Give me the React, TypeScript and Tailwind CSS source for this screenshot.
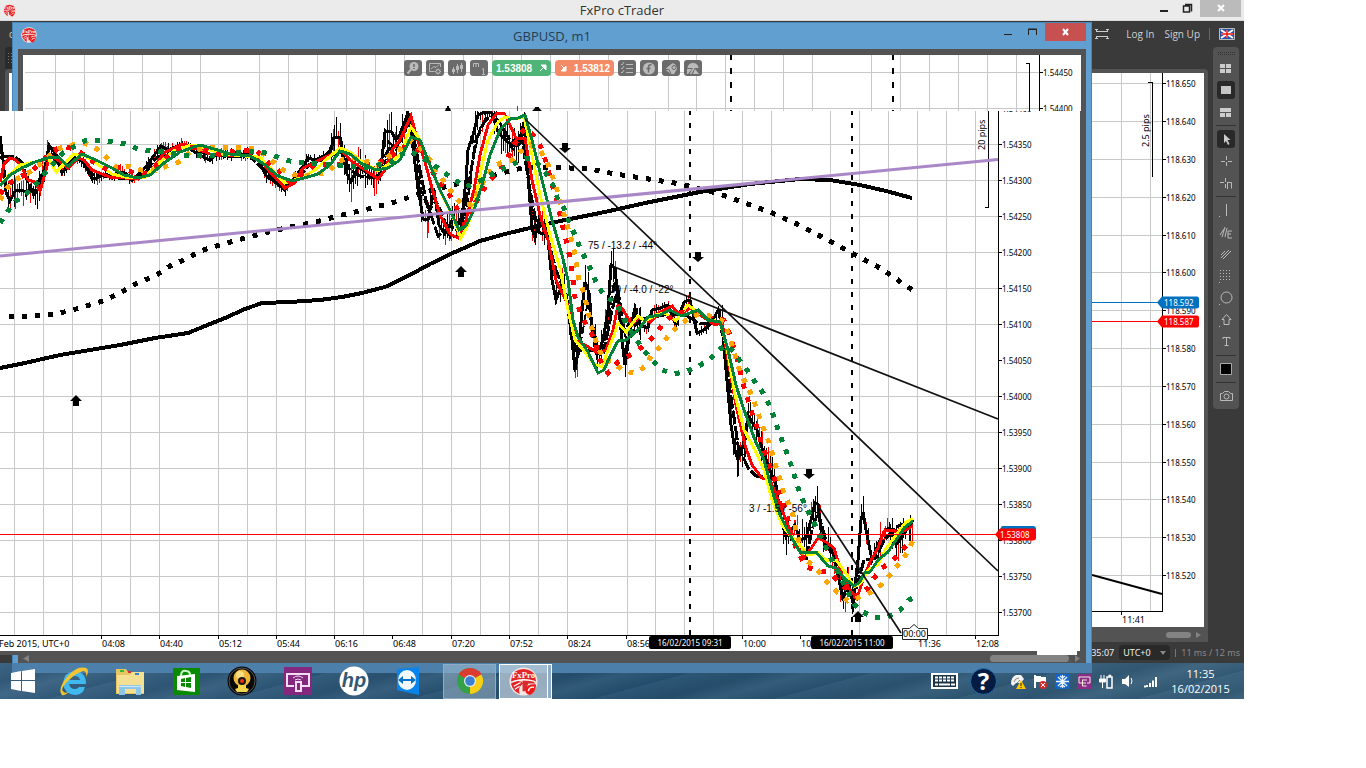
import React from "react";

type Pt = [number, number];

const parse = (s: string): Pt[] =>
  s.trim().split(/\s+/).map((p) => p.split(",").map(Number) as Pt);

const PRICE =
  "0,136 3,160 6,192 10,201 15,191 21,190 26,192 31,190 35,194 40,186 44,170 47,158 49,145 54,152 57,160 62,173 67,166 75,158 83,162 88,171 92,179 97,178 105,174 112,178 118,172 125,173 132,180 140,173 148,164 155,154 161,146 168,150 175,147 182,144 190,149 198,154 205,158 210,160 217,154 225,153 235,155 248,154 258,158 266,176 275,182 285,190 293,180 302,168 308,158 315,160 325,156 331,150 334,137 340,137 342,152 347,174 351,182 358,167 365,171 374,178 380,175 385,132 391,131 396,140 400,134 408,113 412,140 417,180 423,219 428,220 434,190 439,225 445,234 452,220 460,224 463,208 466,180 468,150 473,135 478,115 485,112 492,113 497,130 505,140 512,145 518,146 524,122 528,175 532,228 535,238 540,215 544,230 548,240 552,280 556,300 562,285 567,300 572,340 575,370 579,345 583,300 585,282 588,290 591,320 597,355 603,340 608,310 611,265 615,268 618,300 622,340 625,365 630,330 635,308 640,325 648,328 652,310 660,308 668,305 676,325 684,302 690,300 697,333 704,330 712,322 718,310 722,325 726,370 731,425 735,450 738,460 745,440 748,415 752,422 757,430 762,448 770,470 776,485 781,520 786,537 795,525 800,540 806,538 811,520 815,503 818,504 821,530 826,545 832,550 838,575 843,600 848,580 853,603 858,560 861,520 863,512 866,530 872,560 878,545 885,530 890,528 896,545 903,535 910,525 913,520";

const INNER =
  "0,158 6,156 14,156 22,162 27,180 33,193 40,178 46,166 52,155 60,166 70,162 78,158 86,164 92,174 104,176 118,178 134,178 146,172 156,158 170,152 184,146 196,152 210,154 224,156 250,156 262,168 278,182 288,186 300,176 310,164 328,158 340,150 350,170 360,176 376,178 388,150 400,142 410,118 419,165 426,200 438,236 450,226 460,232 468,190 476,140 486,118 498,120 510,140 522,140 530,190 538,232 547,236 556,270 564,290 576,350 590,350 604,352 612,310 618,290 624,330 634,318 650,318 668,314 684,314 700,324 722,322 730,390 738,445 748,468 756,476 770,478 778,510 788,532 798,548 806,560 812,530 818,512 828,548 838,562 846,590 856,590 864,560 876,558 884,540 898,526 913,522";

const ECHO =
  "384,168 389,142 396,150 404,130 411,124 415,150 421,190 429,212 436,200 443,214 450,238 458,236 464,228 470,186 473,160 480,128 490,116 500,122 507,142 514,150 520,138 526,150 531,200 536,228 546,224 551,262 558,290 566,296 570,320 578,358 583,330 588,300 594,330 600,356 607,330 614,282 620,318 628,345 638,320";

const RED =
  "0,182 4,164 10,158 16,160 22,168 28,180 35,182 40,191 46,170 50,155 58,160 68,168 78,158 84,160 92,170 102,174 110,177 125,178 140,178 147,176 155,165 165,152 183,144 195,148 210,154 225,155 245,155 258,157 270,172 285,188 295,183 303,168 315,162 330,155 340,149 350,160 365,170 378,179 385,170 392,150 400,140 411,116 417,138 425,162 432,188 440,215 450,234 458,238 466,220 474,190 480,155 488,125 497,113 504,113 510,125 516,138 525,138 532,180 540,215 548,240 556,280 568,305 575,340 585,345 598,353 606,350 613,330 618,305 622,308 632,325 638,318 650,322 660,312 672,306 680,315 690,308 700,315 715,325 722,322 728,360 736,405 745,445 752,465 762,478 770,480 778,500 788,525 796,545 804,558 810,550 818,538 826,542 834,548 842,575 850,590 857,598 863,580 870,562 878,548 884,531 892,530 900,533 913,526";

const YELLOW =
  "0,186 8,176 20,165 35,162 48,158 56,172 64,164 74,154 85,156 97,164 112,174 130,178 145,177 160,162 175,150 192,145 205,148 222,154 245,156 260,157 272,170 285,183 300,178 315,170 328,158 340,148 350,152 362,162 378,171 390,163 400,155 411,127 420,140 430,165 442,195 452,215 461,238 468,225 475,200 482,165 488,140 498,122 505,117 514,119 524,117 530,145 540,195 550,235 560,268 568,310 575,340 585,352 594,364 602,367 608,350 614,335 618,323 626,332 638,316 645,321 656,315 665,313 676,321 688,305 698,312 710,320 720,322 727,348 735,395 744,430 755,450 764,470 772,500 782,525 790,535 800,545 808,555 818,553 826,560 836,560 846,573 854,587 862,582 868,570 878,565 885,550 896,535 906,522 913,519";

const GREEN =
  "0,186 10,175 22,168 35,162 48,158 58,157 68,166 82,154 98,161 112,168 124,175 138,178 150,175 164,163 180,152 200,145 214,149 230,154 250,156 264,164 278,176 292,181 304,178 318,174 330,165 340,151 350,154 362,164 376,170 388,168 400,160 411,137 420,140 430,165 440,190 450,210 459,230 466,226 474,210 482,185 490,155 500,130 510,119 518,118 525,115 532,140 542,180 552,220 562,255 568,280 573,320 578,337 588,352 598,373 604,370 610,356 618,341 626,340 638,330 648,317 660,315 670,310 682,316 698,310 708,320 720,322 728,350 736,385 744,410 755,440 764,460 772,490 780,515 790,535 800,552 816,552 828,566 836,568 844,578 854,586 860,582 864,573 870,572 878,560 888,552 896,540 904,528 913,521";

const DOT_GREEN =
  "0,223 7,212 16,201 27,193 36,184 45,173 54,163 63,153 75,146 86,140 99,140 113,142 126,144 138,149 152,151 165,152 190,156 217,155 256,151 270,154 282,159 294,162 309,163 330,165 348,166 363,168 378,165 390,162 400,155 410,151 430,162 443,172 455,180 465,187 478,182 488,176 500,170 512,165 525,158 535,160 545,172 553,185 558,200 565,210 570,225 575,235 580,248 586,260 592,272 597,285 605,296 616,303 622,315 628,327 635,338 643,349 652,360 662,370 674,374 687,371 699,366 710,359 720,349 728,345 738,358 747,370 755,382 763,393 769,404 774,417 778,430 783,443 788,456 792,468 796,481 800,494 806,507 812,519 818,531 824,543 830,556 836,568 842,580 848,592 854,604 863,612 875,618 888,617 900,610 909,600 913,598";

const DOT_ORANGE =
  "0,200 7,188 17,179 28,173 39,165 50,155 60,148 72,145 85,143 97,149 107,158 117,168 129,166 141,170 154,171 167,166 179,162 190,152 203,148 217,147 230,147 243,148 256,149 268,157 280,168 290,174 302,176 314,175 328,172 338,162 350,157 363,160 378,165 390,155 400,149 411,141 422,150 430,160 437,173 447,185 453,194 462,205 472,204 478,192 484,180 494,166 503,162 512,160 520,152 530,145 540,150 547,162 552,175 557,190 562,208 565,218 570,235 574,250 576,262 579,280 584,293 587,307 590,320 593,333 598,347 604,360 614,363 623,371 635,373 646,366 652,354 662,345 670,333 680,325 692,316 702,314 714,317 724,322 730,338 735,355 740,372 746,384 753,398 758,413 762,425 767,437 771,449 775,463 779,476 783,490 788,502 793,515 796,530 800,545 806,560 816,568 825,580 837,592 848,601 860,597 872,592 882,584 892,573 900,562 908,552 913,540";

const DOT_RED =
  "0,194 8,184 18,178 30,172 40,164 50,153 62,146 75,149 84,155 95,163 108,170 120,167 134,173 148,173 160,163 170,154 184,147 200,148 216,155 240,150 256,150 268,162 279,171 290,182 302,174 316,164 330,164 343,165 360,164 376,164 392,156 404,147 416,148 427,160 436,178 448,192 458,210 470,212 482,192 490,180 500,170 508,157 516,142 525,128 533,135 541,147 547,165 551,182 556,197 560,215 566,240 570,258 572,272 575,297 580,312 586,325 594,338 600,360 608,373 618,362 630,355 642,347 655,335 664,322 678,312 695,314 712,318 724,320 730,335 738,362 744,387 748,400 752,413 757,427 762,445 768,460 773,475 779,492 786,510 790,530 796,548 806,567 817,570 830,573 842,585 856,597 868,588 874,578 882,568 893,560 902,550 911,540";

const SLOW =
  "0,368 25,363 60,355 90,350 120,345 155,338 188,333 205,326 225,318 245,309 262,303 290,302 320,300 342,297 362,293 385,287 408,276 430,264 455,252 480,241 505,234 530,228 560,221 600,213 650,202 700,192 750,184 800,179 830,180 860,185 886,191 912,198";

const SLOW_DOTS =
  "9,317 35,316 56,314 80,308 103,301 120,293 135,284 155,276 170,266 188,258 200,251 213,247 238,240 264,233 290,227 316,222 342,215 368,209 395,202 407,198 433,190 457,184 483,180 498,174 522,168 550,167 590,169 615,174 655,180 681,184 700,189 720,194 745,203 770,212 795,223 820,236 850,252 880,268 914,291";

function wicks() {
  const pts = parse(PRICE);
  let seed = 7;
  const rnd = () => (seed = (seed * 16807) % 2147483647) / 2147483647;
  const black: string[] = [];
  const red: string[] = [];
  for (let i = 1; i < pts.length; i++) {
    const [x0, y0] = pts[i - 1];
    const [x1, y1] = pts[i];
    for (let x = x0; x < x1; x += 2) {
      const y = y0 + ((y1 - y0) * (x - x0)) / (x1 - x0);
      const calm = (x > 50 && x < 330) || (x > 640 && x < 720);
      const a = calm ? 7 : 20;
      const up = Math.round(rnd() * a);
      const down = Math.round(rnd() * a);
      const d = `M${x},${Math.round(y) - up}v${up + down}`;
      (rnd() > 0.68 ? red : black).push(d);
    }
  }
  return { black: black.join(""), red: red.join("") };
}

const GRID_X = [14, 43, 72, 101, 130, 159, 218, 247, 276, 305, 334, 363, 422, 451, 480, 509, 538, 567, 627, 655, 684, 713, 742, 771, 830, 859, 888, 917, 946, 975];
const PRICES: [string, number][] = [
  ["1.54350", 145], ["1.54300", 181], ["1.54250", 217], ["1.54200", 253],
  ["1.54150", 289], ["1.54100", 325], ["1.54050", 361], ["1.54000", 397], ["1.53950", 433],
  ["1.53900", 469], ["1.53850", 505], ["1.53800", 541], ["1.53750", 577], ["1.53700", 613],
];
const TIMES: [string, number][] = [
  ["04:08", 101], ["04:40", 159], ["05:12", 218], ["05:44", 276], ["06:16", 334], ["06:48", 392],
  ["07:20", 451], ["07:52", 509], ["08:24", 567], ["08:56", 626], ["10:00", 742], ["10:32", 800],
  ["11:36", 917], ["12:08", 975],
];

const tiny = "font-['Noto_Sans','Open_Sans',sans-serif] text-[8px]";
const small = "font-['Noto_Sans','Open_Sans',sans-serif] text-[9px]";

function Arrow({ x, y, up }: { x: number; y: number; up?: boolean }) {
  return (
    <path
      d={up ? "M0,-6L6,0H3V5H-3V0H-6Z" : "M0,5L6,0H3V-5H-3V0H-6Z"}
      transform={`translate(${x},${y})`}
      fill="#000"
    />
  );
}

function MainChart() {
  const w = wicks();
  return (
    <svg width="1080" height="540" viewBox="0 111 1080 540" className="block" role="img" aria-label="GBPUSD one minute chart">
      <g stroke="#c8c8c8" shapeRendering="crispEdges">
        {GRID_X.map((x) => <path key={x} d={`M${x + 0.5},111V635`} />)}
        {PRICES.filter(([, y]) => y !== 361).map(([p, y]) => <path key={p} d={`M0,${y - 0.5}H998`} />)}
      </g>
      <g stroke="#000" shapeRendering="crispEdges">
        <path d="M998.500,111V635.500M0,635.500H999" fill="none" />
        {PRICES.map(([p, y]) => <path key={p} d={`M999,${y - 0.5}h3`} />)}
        {TIMES.map(([t, x]) => <path key={t} d={`M${x + 0.5},636v3`} />)}
        <path d="M985,207.500H988.500V111" fill="none" />
        <path d="M690,111V635M852,111V635" strokeWidth="2" strokeDasharray="5 8" strokeDashoffset="1" />
      </g>
      <g className={tiny}>
        <text x="1002" y="112">1.54400</text>
        {PRICES.map(([p, y]) => <text key={p} x="1002" y={y + 3}>{p}</text>)}
      </g>
      <g className={small}>
        {TIMES.map(([t, x]) => <text key={t} x={x + 1} y="647">{t}</text>)}
        <text x="-1" y="647">Feb 2015, UTC+0</text>
        <text transform="translate(985,150) rotate(-90)">20 pips</text>
      </g>
      <g fill="none" shapeRendering="crispEdges">
        <path d={w.black} stroke="#000" />
        <path d={w.red} stroke="#f00" />
        <polyline points={INNER} stroke="#000" strokeWidth="3" strokeDasharray="14 2" />
        <polyline points={ECHO} stroke="#000" strokeWidth="2" strokeDasharray="9 3" />
        <polyline points={PRICE} stroke="#000" strokeWidth="3" />
        <polyline points={SLOW_DOTS} stroke="#000" strokeWidth="5" strokeDasharray="5 8" />
        <polyline points={SLOW} stroke="#000" strokeWidth="4" />
        <polyline points={RED} stroke="#f00" strokeWidth="3" />
        <polyline points={YELLOW} stroke="#ff0" strokeWidth="3" />
        <polyline points={DOT_RED} stroke="#f00" strokeWidth="5" strokeDasharray="5 9" />
        <polyline points={DOT_ORANGE} stroke="#ffa500" strokeWidth="5" strokeDasharray="5 8" />
        <polyline points={DOT_GREEN} stroke="#008237" strokeWidth="5" strokeDasharray="5 8" />
        <polyline points={GREEN} stroke="#008237" strokeWidth="3" />
      </g>
      <path d="M0,256L998,159.500" stroke="#aa88c8" strokeWidth="3" />
      <g stroke="#111" strokeWidth="1.700">
        <path d="M525,119L998,571M612,266L724,311L998,419M817,504L901,633" fill="none" />
      </g>
      <path d="M0,534.500H998" stroke="#f00" shapeRendering="crispEdges" />
      <Arrow x={565} y={148} />
      <Arrow x={698} y={257} />
      <Arrow x={809} y={474} />
      <Arrow x={76} y={401} up />
      <Arrow x={461} y={272} up />
      <Arrow x={858} y={617} up />
      <g className="font-['Liberation_Sans',Arial,sans-serif] text-[10px]">
        <text x="588" y="249">75 / -13.2 / -44°</text>
        <text x="610" y="293">39 / -4.0 / -22°</text>
        <text x="749" y="512">3 / -1.5 / -56°</text>
      </g>
      <path d="M999,531l3,-5h31q3,0 3,3v8H1002z" fill="#0070c0" />
      <path d="M995,534.500l5,-6h33q3,0 3,3v6q0,3 -3,3H1000z" fill="#f00" />
      <text x="1000" y="538" fill="#fff" className={tiny}>1.53808</text>
      <rect x="649" y="636" width="82" height="13" rx="2" />
      <rect x="811" y="636" width="82" height="13" rx="2" />
      <g fill="#fff" className={tiny}>
        <text x="690" y="646" textAnchor="middle">16/02/2015 09:31</text>
        <text x="852" y="646" textAnchor="middle">16/02/2015 11:00</text>
      </g>
      <path d="M902.500,628.500h7l4.500,-4l4.500,4h9v11h-25z" fill="#fff" stroke="#222" />
      <text x="903" y="637" className={small}>00:00</text>
    </svg>
  );
}

function UpperChart() {
  return (
    <svg width="1056" height="56" viewBox="24 55 1056 56" className="block" aria-hidden="true">
      <g stroke="#c8c8c8" shapeRendering="crispEdges">
        {GRID_X.map((x) => <path key={x} d={`M${x + 40.5},55V111`} />)}
        <path d="M24,72.500H1038M24,108.500H1038" />
      </g>
      <g stroke="#000" fill="none" shapeRendering="crispEdges">
        <path d="M1038.500,55V111M1039,72.500h3M1039,108.500h3M1025,63.500H1028.500V111" />
        <path d="M730,55V111M892,55V111" strokeWidth="2" strokeDasharray="6 8" strokeDashoffset="1" />
        <path d="M516.500,106v5" stroke="#f00" />
      </g>
      <path d="M444,111l1,-3h1v-2h2v2h1l1,3zM531,111l3,-3v-1h4v1l3,3z" />
      <g className={tiny}>
        <text x="1042" y="76">1.54450</text>
        <text x="1042" y="112">1.54400</text>
      </g>
    </svg>
  );
}

function SideChart() {
  const ys = [83, 121, 159, 197, 235, 272, 310, 348, 386, 424, 462, 499, 537, 575];
  return (
    <svg width="112" height="554" viewBox="1092 73 112 554" className="block bg-white" role="img" aria-label="Secondary price chart">
      <g stroke="#c8c8c8" shapeRendering="crispEdges">
        <path d="M1121.500,73V611M1150.500,73V611" />
        {ys.map((y) => <path key={y} d={`M1092,${y + 0.5}H1162`} />)}
      </g>
      <g stroke="#000" fill="none" shapeRendering="crispEdges">
        <path d="M1162.500,73V611.500H1092M1121.500,612v3M1148,82.500H1152.500V177" />
        {ys.map((y) => <path key={y} d={`M1163,${y + 0.5}h3`} />)}
      </g>
      <g className={tiny}>
        {ys.map((y, i) => <text key={y} x="1166" y={y + 4}>{(118.65 - i * 0.01).toFixed(3)}</text>)}
      </g>
      <g className={small}>
        <text x="1122" y="623">11:41</text>
        <text transform="translate(1149,147) rotate(-90)">2.5 pips</text>
      </g>
      <path d="M1092,575L1162,594" stroke="#000" strokeWidth="2" />
      <path d="M1092,302.500H1158" stroke="#0070c0" />
      <path d="M1092,321.500H1158" stroke="#f00" />
      <path d="M1157,302.500l5,-6h35q2,0 2,2v8q0,2 -2,2h-35z" fill="#0070c0" />
      <path d="M1157,321.500l5,-6h35q2,0 2,2v8q0,2 -2,2h-35z" fill="#f00" />
      <g fill="#fff" className={tiny}>
        <text x="1164" y="306">118.592</text>
        <text x="1164" y="325">118.587</text>
      </g>
    </svg>
  );
}

function FxLogo({ size }: { size: number }) {
  return (
    <svg width={size} height={size} viewBox="0 0 30 30" aria-hidden="true">
      <circle cx="15" cy="15" r="14.500" fill="#f4e6e4" />
      <path d="M3,10Q4,3 15,2Q26,3 27,10L28,15Q15,11 2,15Z" fill="#e3262a" />
      <path d="M2,17Q11,12 15,17Q9,20 11,28Q4,25 2,17Z" fill="#e3262a" />
      <path d="M14,14h11l2,3h-7l-3,8h-3z" fill="#d82a2a" />
      <path d="M17,23Q19,17 28,18Q28,25 22,29Q16,28 17,23Z" fill="#f01818" />
      <path d="M20,25q1,-5 6,-4" stroke="#fff" strokeWidth="1.500" fill="none" />
      <path d="M4,15Q15,11 27,15M5,20L12,16M6,23l5,-3" stroke="#fff" strokeWidth="1.200" fill="none" />
      <text x="15" y="11" textAnchor="middle" fill="#fff" className="font-['Liberation_Serif',serif] text-[9px] font-bold">FxPro</text>
    </svg>
  );
}

const CHART_ICONS: Record<string, React.ReactNode> = {
  "Chart zoom": <><circle cx="10" cy="6.500" r="4.500" fill="#bbb" stroke="none" /><path d="M7,9.500L3.500,13.500" strokeWidth="2" /><path d="M10,4v3M10,8v1" stroke="#6b6b6b" strokeWidth="1.500" /></>,
  "Chart settings": <><path d="M14.500,7V3.500h-11v8h5M5,9l3,-2.500l2,1l3,-3" /><circle cx="12" cy="11.500" r="2" /><path d="M12,8.500v1M12,13.500v1M9,11.500h1M14,11.500h1M10,9.500l1,1M13,12.500l1,1M14,9.500l-1,1M10,13.500l1,-1" /></>,
  "Chart type": <><path d="M5.500,7v7M9.500,4v9M13.500,3v9" /><path d="M4,9h3v3H4zM8,6h3v4H8zM12,5h3v4h-3z" fill="#bbb" stroke="none" /></>,
  "Timeframe": <><path d="M3.500,7V3.500h5V7M6,4V7M12,9.500l1.500,-1v6M12,14.500h3" /></>,
  "Watch list": <><path d="M8,4.500h7M8,8.500h7M8,12.500h7" /><path d="M3,4l1,1l2,-3M3,8l1,1l2,-3M3,12l1,1l2,-3" /></>,
  "Indicators": <><circle cx="9" cy="8.500" r="6" fill="#bbb" stroke="none" /><path d="M11.500,5Q8.500,4 8.500,7.500V12.500M6.500,8.500h4" stroke="#6b6b6b" strokeWidth="1.500" /></>,
  "Templates": <><path d="M3,9.500L8,5l3,-2q4,2 4,6l-3,5h-3z" fill="#bbb" stroke="none" /><circle cx="12" cy="7.500" r="2" stroke="#6b6b6b" /><path d="M3,9.500h4l2,4" stroke="#6b6b6b" /></>,
  "Objects": <><path d="M3.500,8a5.500,5 0 0 1 11,0z" fill="#bbb" stroke="none" /><path d="M3,9h5L4,14H3zM11,9l4,5h-6z" fill="#bbb" stroke="none" /><path d="M6.500,14l3.500,-6" stroke="#bbb" strokeWidth="1.500" /></>,
};

function ChartButton({ name }: { name: string }) {
  return (
    <button type="button" aria-label={name} className="h-4 w-[18px] rounded-[3px] bg-[#6b6b6b]">
      <svg width="18" height="16" viewBox="0 0 18 16" fill="none" stroke="#bbb" className="block" aria-hidden="true">{CHART_ICONS[name]}</svg>
    </button>
  );
}

const TOOLS: (null | { name: string; on?: boolean; art: React.ReactNode })[] = [
  { name: "Grid view", art: <path d="M5,7h5v4H5zM11,7h5v4h-5zM5,12h5v4H5zM11,12h5v4h-5z" fill="#ccc" stroke="none" /> },
  { name: "Single view", on: true, art: <path d="M6,7h10v8H6z" fill="#c4c4c4" stroke="none" /> },
  { name: "Mixed view", art: <path d="M5,7h11v4H5zM5,12h5v4H5zM11,12h5v4h-5z" fill="#ccc" stroke="none" /> },
  null,
  { name: "Pointer", on: true, art: <path d="M9,6v9l2,-2l2,4l1.500,-1l-2,-4h3z" fill="#ccc" stroke="none" /> },
  { name: "Crosshair", art: <path d="M11.500,6v4M11.500,12v4M6,11.500h4M13,11.500h4" /> },
  { name: "Market snap", art: <path d="M10.500,6v4M5,10.500h4M10.500,12v4M12,10.500h4.500v6M12.500,11v6" /> },
  null,
  { name: "Line", art: <path d="M11.500,5v12M4,17.500h1" /> },
  { name: "Equidistant channel", art: <path d="M5,14L9,8M7,16L10,6M10,16L12,7M13,17V10h4M13,13h3M13,17h4" /> },
  { name: "Parallel lines", art: <path d="M6,15L14,7M8,16l8,-8M6,12l4,-4" /> },
  { name: "Fibonacci", art: <path d="M5,5.500h12M5,8.500h12M5,11.500h12M5,14.500h12M4,17.500h1" strokeDasharray="1 2" /> },
  { name: "Ellipse", art: <><circle cx="11.500" cy="10.500" r="5.500" /><path d="M4,17.500h1" /></> },
  { name: "Arrow", art: <path d="M11.500,5.500L7,10.500h2v5h5v-5h2zM4,17.500h1" /> },
  { name: "Text", art: <path d="M8,8V6.500h7V8M11.500,6.500v8M9.500,14.500h4" /> },
  null,
  { name: "Colour", art: <path d="M5.500,5.500h11v11h-11z" fill="#000" stroke="#aaa" /> },
  null,
  { name: "Snapshot", art: <><path d="M5.500,8.500h2l2,-2h4l2,2h2v7h-12z" /><circle cx="11.500" cy="11.500" r="2.500" /></> },
];

const ui = "font-['Open_Sans','Noto_Sans',sans-serif]";

function TaskIcon({ name }: { name: string }) {
  const art: Record<string, React.ReactNode> = {
    "Internet Explorer": <><path d="M27,18H10q1,5 6,5q3,0 4,-2h6q-2,8 -10,8Q5,28 4,17Q5,6 16,5q11,1 11,13zM10,14h11q-1,-4 -5,-4t-6,4z" fill="#3fb9f0" /><path d="M3,29Q-2,23 8,11T27,2q4,2 0,9q1,-6 -3,-6Q17,7 9,15T4,25q1,3 6,1q-4,4 -7,3z" fill="#f2c431" /></>,
    "File Explorer": <><path d="M1,3h10l2,3h16v22H1z" fill="#e7c55f" /><path d="M2,9h13l2,-3h12v21H2z" fill="#f5df93" /><path d="M5,4h4v2H5z" fill="#3b3" /><path d="M13,5h3v2h-3z" fill="#c33" /><path d="M20,7h4v2h-4z" fill="#38c" /><path d="M4,29V19h22v10h-5v-6h-11v6z" fill="#8cc6e8" /><path d="M4,20.500h22" stroke="#cfe8f8" /></>,
    "Store": <><path d="M2,2h27v27H2z" fill="#0a8a00" /><path d="M6,10l18,-2v18L6,24z" fill="#fff" /><path d="M10,10Q10,4 15,5q4,0 4,4" fill="none" stroke="#cfc" strokeWidth="2" /><path d="M10,13l4,-1v4h-4zM15,12l5,-1v5h-5zM10,17h4v4l-4,-1zM15,17h5v5l-5,-1z" fill="#0a8a00" /></>,
    "Webcam": <><circle cx="15" cy="15" r="14.500" fill="#080808" /><circle cx="15" cy="15" r="13" fill="none" stroke="#555" /><circle cx="15" cy="12" r="8.500" fill="#eeb735" /><circle cx="13" cy="9" r="4" fill="#f9df80" /><path d="M11,19h8v3l3,1l-2,3h-10l-2,-3l3,-1z" fill="#f5d54e" /><circle cx="15" cy="15" r="4" fill="#181818" /><circle cx="15" cy="15" r="2" fill="#e31" /></>,
    "Connected devices": <><path d="M1,1h28v28H1z" fill="#84277f" /><path d="M11,20H4V8h22v12h-7" fill="none" stroke="#f3ddf3" strokeWidth="2" /><path d="M13,16h5v9h-5z" fill="none" stroke="#f3ddf3" strokeWidth="2" /><path d="M10,12q5,-4 10,0M12,14q3,-2 6,0" fill="none" stroke="#f3ddf3" /></>,
    "HP": <><circle cx="15" cy="15" r="14.500" fill="#fff" /><text x="15" y="21" textAnchor="middle" fill="#345873" className="font-['Liberation_Sans',sans-serif] text-[20px] font-bold italic">hp</text></>,
    "TeamViewer": <><path d="M2,3L24,1v28L2,24z" fill="#0a84ea" /><ellipse cx="12" cy="14" rx="9" ry="10" fill="#f3f8fd" /><path d="M3,14l5,-4v3h8v-3l5,4l-5,4v-3h-8v3z" fill="#0a71c8" /></>,
    "Chrome": <><circle cx="15" cy="15" r="13" fill="#34a048" /><path d="M15,15L3.700,8.500A13,13 0 0 1 26.300,8.500z" fill="#dc3b2f" /><path d="M15,15L26.300,8.500A13,13 0 0 1 15,28z" fill="#f7cf16" /><path d="M14,8h12.300l-2,-3z" fill="#dc3b2f" /><circle cx="15" cy="15" r="6" fill="#e8eef4" /><circle cx="15" cy="15" r="4.800" fill="#3d7fd4" /></>,
  };
  return (
    <svg width="30" height="30" viewBox="0 0 30 30" aria-hidden="true">{art[name]}</svg>
  );
}

const TRAY: [string, React.ReactNode][] = [
  ["Device warning", <><path d="M1,11Q1,4 6,2h5l3,4l-3,4H6l-3,3z" fill="#f2f2f2" /><path d="M4,9q1,-4 5,-4M7,10l3,-3" stroke="#8a8a8a" fill="none" /><path d="M11,7l5,9H6z" fill="#ffc400" /><path d="M11,10v3M11,14v1" stroke="#222" /></>],
  ["Action centre", <><path d="M3,2v13" stroke="#fff" strokeWidth="2" /><path d="M4,3h5v1h5v6H9V9H4z" fill="#fff" /><circle cx="11" cy="12" r="4" fill="#d52b2b" /><path d="M9,10l4,4M13,10l-4,4" stroke="#fff" /></>],
  ["Temperature", <><path d="M1,1h15v15H1z" fill="#1565c8" /><path d="M8.500,2v13M2,8.500h13M4,4l9,9M13,4l-9,9M6,3l2.500,2l2.500,-2M6,14l2.500,-2l2.500,2" stroke="#e8f4ff" strokeWidth="1.300" fill="none" /></>],
  ["Devices", <><path d="M1,1h15v15H1z" fill="#8b2d88" /><path d="M6,10H3V4h11v6h-3M6,7h5M6.500,7v6h4M7,10h3" stroke="#eed" fill="none" /></>],
  ["Battery", <><path d="M9,4h5v11H9zM10.500,2.500h2v1" stroke="#fff" strokeWidth="1.500" fill="none" /><path d="M3,2v4M6,2v4M1.500,6h6v3h-6zM4.500,9v6" stroke="#fff" fill="#fff" /></>],
  ["Volume", <><path d="M2,6h3l4,-4v12L5,11H2z" fill="#fff" /><path d="M11,5q2,3 0,6" stroke="#fff" fill="none" /></>],
  ["Network", <path d="M2,13.500h2M5,12v2M8,10v4M11,7.500v6.500M14,4v10" stroke="#fff" strokeWidth="2" />],
];

export default function App() {
  return (
    <main className={`min-h-screen bg-white pr-[122px] text-black ${ui}`}>
      <div className="relative overflow-hidden">
        <header className="flex h-[21px] items-center border-b border-[#d8d8d8] bg-[#ebebeb]">
          <div className="w-[124px] pl-[3px]"><FxLogo size={13} /></div>
          <h1 className="flex-1 text-center text-[13px] leading-5 text-[#333]">FxPro cTrader</h1>
          <div className="flex h-full w-[124px] justify-end">
            <button type="button" aria-label="Minimize" className="w-6"><svg width="24" height="20" aria-hidden="true"><path d="M4,11h8" stroke="#222" strokeWidth="2" /></svg></button>
            <button type="button" aria-label="Restore" className="w-5"><svg width="20" height="20" fill="none" stroke="#222" aria-hidden="true"><path d="M3.500,6h6v6h-6zM5,4.500h6.500v7" strokeWidth="1.500" /></svg></button>
            <button type="button" aria-label="Close" className="mr-[3px] h-[17px] w-[41px] bg-[#bbb]"><svg width="41" height="17" className="block" aria-hidden="true"><path d="M18,5l6,6M24,5l-6,6" stroke="#fff" strokeWidth="2" /></svg></button>
          </div>
        </header>

        <div className="flex flex-col bg-[#3a3a3a]">
          <div className="flex h-[26px] items-center justify-between pr-[9px] text-[10px] text-[#d0d0d0]">
            <span className="pl-[9px]">c</span>
            <nav className="flex items-center gap-[9px]">
              <button type="button" aria-label="Full screen" className="mr-2"><svg width="14" height="12" fill="none" stroke="#ccc" className="block" aria-hidden="true"><path d="M0,1.500h3M0,10.500h3M11,1.500h3M11,10.500h3M2,3.500h10M2,8.500h10M1.500,1v3M1.500,8v3M12.500,1v3M12.500,8v3" /></svg></button>
              <button type="button" className="mr-px">Log In</button>
              <button type="button">Sign Up</button>
              <span className="h-3 w-px bg-[#666]" />
              <button type="button" aria-label="Language"><svg width="16" height="12" className="block" aria-hidden="true"><path d="M0.500,0.500h15v11H0.500z" fill="#2a51a3" stroke="#bbb" /><path d="M2,2l12,8M14,2L2,10M8,2v8M2,6h12" stroke="#fff" strokeWidth="2" /><path d="M8,2v8M2,6h12" stroke="#e11" strokeWidth="1.500" /></svg></button>
            </nav>
          </div>
          <div className="flex">
            <div className="flex flex-1 flex-col pl-[5px]">
              <div className="h-[22px] w-4 rounded-t bg-[#2b2b2b] pt-1.5 pl-[3px]">
                <svg width="6" height="12" className="block" aria-hidden="true"><path d="M0.500,0v12M3.500,0v12" stroke="#777" strokeDasharray="1 2" /></svg>
              </div>
              <div className="rounded-t-sm bg-[#535353] px-1 pt-1">
                <div className="flex justify-end bg-white"><SideChart /></div>
                <div className="flex h-[15px] items-center justify-end gap-[5px] pr-[3px]">
                  <span className="h-1.5 w-[25px] rounded-full bg-[#838383]" />
                  <svg width="5" height="6" aria-hidden="true"><path d="M0,0L5,3L0,6z" fill="#838383" /></svg>
                </div>
              </div>
            </div>
            <aside aria-label="Drawing tools" className="mr-[5px] ml-[5px] flex w-[26px] flex-col items-center self-start rounded bg-[#535353] pb-0.5">
              <svg width="18" height="10" className="block" aria-hidden="true"><path d="M1,5.500h17M1,7.500h17" stroke="#333" strokeDasharray="1 1" /></svg>
              {TOOLS.map((t, i) =>
                t === null ? (
                  <div key={i} className="flex h-[5px] items-center"><span className="h-px w-5 bg-[#333]" /></div>
                ) : (
                  <button key={i} type="button" aria-label={t.name} className="flex h-[22px] items-center">
                    <span className={t.on ? "rounded-[3px] bg-[#292929]" : "rounded-[3px]"}>
                      <svg width="18" height="18" viewBox="2 2 18 18" fill="none" stroke="#bbb" className="block" aria-hidden="true">{t.art}</svg>
                    </span>
                  </button>
                )
              )}
            </aside>
          </div>
          <footer className="flex h-[21px] items-center justify-end gap-[5px] pr-1 text-[#eee]">
            <span className={small}>11:35:07</span>
            <div className="relative">
              <select aria-label="Time zone" className="block h-[15px] w-[51px] appearance-none rounded-sm bg-[#292929] pl-1 font-['Noto_Sans',sans-serif] text-[9px] leading-[15px] text-[#eee]"><option>UTC+0</option></select>
              <svg width="6" height="4" className="absolute top-1.5 right-1" aria-hidden="true"><path d="M0,0h6L3,4z" fill="#888" /></svg>
            </div>
            <span className="h-2 w-px bg-[#9a6a4a]" />
            <span className="font-['Noto_Sans',sans-serif] text-[9px] text-[#888]">11 ms / 12 ms</span>
          </footer>
        </div>

        <section aria-label="GBPUSD, m1" className="absolute top-[22px] right-[152px] bottom-[26px] left-3 flex flex-col border border-[#4784b8] bg-[#629fd1] px-[5px] pb-[9px]">
          <div className="flex h-[26px] shrink-0">
            <div className="w-[104px] pt-1 pl-[3px]"><FxLogo size={16} /></div>
            <h2 className="flex-1 text-center text-[13px] leading-[26px] text-[#263c50]">GBPUSD, m1</h2>
            <div className="flex w-[104px] justify-end">
              <button type="button" aria-label="Minimize window" className="h-[18px] w-6"><svg width="24" height="18" className="block" aria-hidden="true"><path d="M7,11.500h8" stroke="#222" /></svg></button>
              <button type="button" aria-label="Maximize window" className="h-[18px] w-6"><svg width="24" height="18" fill="none" stroke="#222" className="block" aria-hidden="true"><path d="M7.500,12V6.500h8V12M7,6h9" /></svg></button>
              <button type="button" aria-label="Close window" className="h-[18px] w-[41px] bg-[#c75050]"><svg width="41" height="18" className="block" aria-hidden="true"><path d="M18,6l5,6M23,6l-5,6" stroke="#fff" strokeWidth="2" /></svg></button>
            </div>
          </div>
          <div className="relative flex flex-1 flex-col justify-between bg-[#535353] px-[5px] pt-1.5">
            <div className="flex justify-end bg-white"><UpperChart /></div>
            <div className="flex h-[9px] items-center justify-between">
              <svg width="6" height="7" aria-hidden="true"><path d="M6,0v7L0,3.500z" fill="#838383" /></svg>
              <div className="flex items-center gap-1.5 pr-px">
                <span className="h-[7px] w-[79px] rounded-full bg-[#838383]" />
                <svg width="5" height="7" aria-hidden="true"><path d="M0,0v7L5,3.500z" fill="#838383" /></svg>
              </div>
            </div>
            <div className="absolute inset-x-0 top-[11px] flex justify-center gap-1 pl-0.5">
              {["Chart zoom", "Chart settings", "Chart type", "Timeframe"].map((n) => <ChartButton key={n} name={n} />)}
              <button type="button" className="flex h-4 w-[59px] items-center justify-between rounded-sm bg-[#4fb477] px-1 font-['Liberation_Sans',Arial,sans-serif] text-[10px] font-bold text-white">
                1.53808<svg width="8" height="8" aria-hidden="true"><path d="M1,7l4,-4M2,1h5v5z" stroke="#fff" fill="#fff" /></svg>
              </button>
              <button type="button" className="flex h-4 w-[59px] items-center justify-between rounded-sm bg-[#f58b66] px-1 font-['Liberation_Sans',Arial,sans-serif] text-[10px] font-bold text-white">
                <svg width="8" height="8" aria-hidden="true"><path d="M2,1l3,3M7,2v5H2z" stroke="#fff" fill="#fff" /></svg>1.53812
              </button>
              {["Watch list", "Indicators", "Templates", "Objects"].map((n) => <ChartButton key={n} name={n} />)}
            </div>
          </div>
        </section>

        <div className="absolute top-[111px] right-[164px] left-0 overflow-hidden bg-white"><MainChart /></div>
        <div className="absolute top-[651px] right-[167px] left-0 flex h-1 bg-[#535353]"><span className="ml-auto w-10 bg-white" /></div>

        <div className="relative flex h-9 items-center bg-linear-to-r from-[#365f80] via-[#255070] to-[#375f7b]">
          <div className="absolute inset-0 bg-[repeating-linear-gradient(165deg,#ffffff08_0px,#00000010_18px,#ffffff0d_31px,#0a203018_47px)]" />
          <div className="absolute top-0 right-[152px] left-3 h-2.5 bg-[#4c80aa]" />
          <div className="relative flex h-full flex-1 items-center">
            <button type="button" aria-label="Start" className="flex w-[46px] justify-center">
              <svg width="26" height="26" aria-hidden="true"><path d="M1,5l10,-2v9H1zM12,3l13,-2v11H12zM1,13h10v10l-10,-2zM12,13h13v12l-13,-2z" fill="#fff" /></svg>
            </button>
            {["Internet Explorer", "File Explorer", "Store", "Webcam", "Connected devices", "HP", "TeamViewer"].map((n) => (
              <button key={n} type="button" aria-label={n} className="flex w-14 justify-center"><TaskIcon name={n} /></button>
            ))}
            <button type="button" aria-label="Chrome" className="mr-[3px] ml-[5px] flex h-[35px] w-[53px] items-center justify-center border border-[#8eacc4] bg-[#b8cddd70]"><TaskIcon name="Chrome" /></button>
            <button type="button" aria-label="FxPro cTrader" className="flex h-[35px] w-[49px] items-center justify-center border border-white bg-[#c9d8e4b0]"><FxLogo size={29} /></button>
            <span className="h-[35px] w-1 border-y border-r border-white bg-[#8eacc4]" />
          </div>
          <div className="relative flex items-center">
            <button type="button" aria-label="Touch keyboard" className="mr-3"><svg width="27" height="16" aria-hidden="true"><path d="M1,1h25v14H1z" fill="#1d3447" stroke="#fff" strokeWidth="2" /><path d="M4,4.500h20M4,7.500h20" stroke="#fff" strokeWidth="2" strokeDasharray="3 1" /><path d="M4,11.500h3M8,11.500h11M20,11.500h4" stroke="#fff" strokeWidth="2" /></svg></button>
            <button type="button" aria-label="Help" className="mr-2.5 flex size-[27px] items-center justify-center rounded-full border border-[#1c71a9] bg-[#061b42] text-[24px] leading-none font-bold text-white">?</button>
            {TRAY.map(([n, art]) => (
              <button key={n} type="button" aria-label={n} className="flex w-[22px] justify-center"><svg width="16" height="17" viewBox="0 0 16 17" aria-hidden="true">{art}</svg></button>
            ))}
            <time className="w-[83px] pr-1 pb-px text-center text-[11px] leading-[15px] text-white">11:35<br />16/02/2015</time>
          </div>
        </div>
      </div>
    </main>
  );
}
